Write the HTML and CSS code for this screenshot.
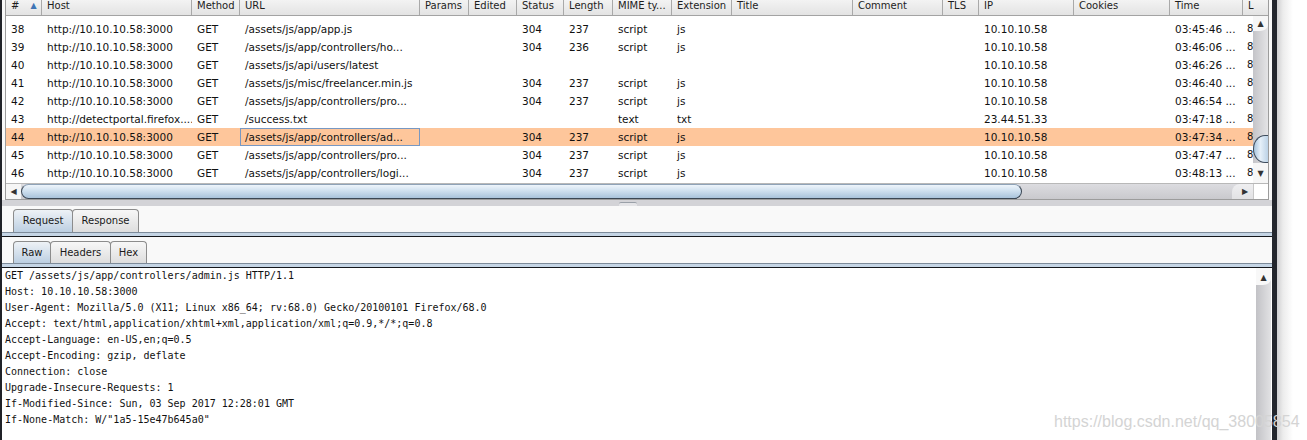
FILE: index.html
```html
<!DOCTYPE html>
<html>
<head>
<meta charset="utf-8">
<link rel="stylesheet" href="styles.css">
</head>
<body>
<div class="screen">
  <div class="edge-left"></div>
  <div class="app">
    <div class="table-panel">
      <div class="table-box">
        <div class="thead">
          <div class="th w-num">#<span class="sort">▲</span></div>
          <div class="th w-host">Host</div>
          <div class="th w-method">Method</div>
          <div class="th w-url">URL</div>
          <div class="th w-params">Params</div>
          <div class="th w-edited">Edited</div>
          <div class="th w-status">Status</div>
          <div class="th w-length">Length</div>
          <div class="th w-mime">MIME ty...</div>
          <div class="th w-ext">Extension</div>
          <div class="th w-title">Title</div>
          <div class="th w-comment">Comment</div>
          <div class="th w-tls">TLS</div>
          <div class="th w-ip">IP</div>
          <div class="th w-cookies">Cookies</div>
          <div class="th w-time">Time</div>
          <div class="th w-last">L</div>
        </div>
        <div class="tbody-wrap">
          <div class="rows">
            <div class="row">
              <div class="td w-num">38</div><div class="td w-host">http://10.10.10.58:3000</div><div class="td w-method">GET</div><div class="td w-url">/assets/js/app/app.js</div><div class="td w-params"></div><div class="td w-edited"></div><div class="td w-status">304</div><div class="td w-length">237</div><div class="td w-mime">script</div><div class="td w-ext">js</div><div class="td w-title"></div><div class="td w-comment"></div><div class="td w-tls"></div><div class="td w-ip">10.10.10.58</div><div class="td w-cookies"></div><div class="td w-time">03:45:46 ...</div><div class="td w-last">8</div>
            </div>
            <div class="row">
              <div class="td w-num">39</div><div class="td w-host">http://10.10.10.58:3000</div><div class="td w-method">GET</div><div class="td w-url">/assets/js/app/controllers/ho...</div><div class="td w-params"></div><div class="td w-edited"></div><div class="td w-status">304</div><div class="td w-length">236</div><div class="td w-mime">script</div><div class="td w-ext">js</div><div class="td w-title"></div><div class="td w-comment"></div><div class="td w-tls"></div><div class="td w-ip">10.10.10.58</div><div class="td w-cookies"></div><div class="td w-time">03:46:06 ...</div><div class="td w-last">8</div>
            </div>
            <div class="row">
              <div class="td w-num">40</div><div class="td w-host">http://10.10.10.58:3000</div><div class="td w-method">GET</div><div class="td w-url">/assets/js/api/users/latest</div><div class="td w-params"></div><div class="td w-edited"></div><div class="td w-status"></div><div class="td w-length"></div><div class="td w-mime"></div><div class="td w-ext"></div><div class="td w-title"></div><div class="td w-comment"></div><div class="td w-tls"></div><div class="td w-ip">10.10.10.58</div><div class="td w-cookies"></div><div class="td w-time">03:46:26 ...</div><div class="td w-last">8</div>
            </div>
            <div class="row">
              <div class="td w-num">41</div><div class="td w-host">http://10.10.10.58:3000</div><div class="td w-method">GET</div><div class="td w-url">/assets/js/misc/freelancer.min.js</div><div class="td w-params"></div><div class="td w-edited"></div><div class="td w-status">304</div><div class="td w-length">237</div><div class="td w-mime">script</div><div class="td w-ext">js</div><div class="td w-title"></div><div class="td w-comment"></div><div class="td w-tls"></div><div class="td w-ip">10.10.10.58</div><div class="td w-cookies"></div><div class="td w-time">03:46:40 ...</div><div class="td w-last">8</div>
            </div>
            <div class="row">
              <div class="td w-num">42</div><div class="td w-host">http://10.10.10.58:3000</div><div class="td w-method">GET</div><div class="td w-url">/assets/js/app/controllers/pro...</div><div class="td w-params"></div><div class="td w-edited"></div><div class="td w-status">304</div><div class="td w-length">237</div><div class="td w-mime">script</div><div class="td w-ext">js</div><div class="td w-title"></div><div class="td w-comment"></div><div class="td w-tls"></div><div class="td w-ip">10.10.10.58</div><div class="td w-cookies"></div><div class="td w-time">03:46:54 ...</div><div class="td w-last">8</div>
            </div>
            <div class="row">
              <div class="td w-num">43</div><div class="td w-host">http://detectportal.firefox....</div><div class="td w-method">GET</div><div class="td w-url">/success.txt</div><div class="td w-params"></div><div class="td w-edited"></div><div class="td w-status"></div><div class="td w-length"></div><div class="td w-mime">text</div><div class="td w-ext">txt</div><div class="td w-title"></div><div class="td w-comment"></div><div class="td w-tls"></div><div class="td w-ip">23.44.51.33</div><div class="td w-cookies"></div><div class="td w-time">03:47:18 ...</div><div class="td w-last">8</div>
            </div>
            <div class="row selected">
              <div class="td w-num">44</div><div class="td w-host">http://10.10.10.58:3000</div><div class="td w-method">GET</div><div class="td w-url focus">/assets/js/app/controllers/ad...</div><div class="td w-params"></div><div class="td w-edited"></div><div class="td w-status">304</div><div class="td w-length">237</div><div class="td w-mime">script</div><div class="td w-ext">js</div><div class="td w-title"></div><div class="td w-comment"></div><div class="td w-tls"></div><div class="td w-ip">10.10.10.58</div><div class="td w-cookies"></div><div class="td w-time">03:47:34 ...</div><div class="td w-last">8</div>
            </div>
            <div class="row">
              <div class="td w-num">45</div><div class="td w-host">http://10.10.10.58:3000</div><div class="td w-method">GET</div><div class="td w-url">/assets/js/app/controllers/pro...</div><div class="td w-params"></div><div class="td w-edited"></div><div class="td w-status">304</div><div class="td w-length">237</div><div class="td w-mime">script</div><div class="td w-ext">js</div><div class="td w-title"></div><div class="td w-comment"></div><div class="td w-tls"></div><div class="td w-ip">10.10.10.58</div><div class="td w-cookies"></div><div class="td w-time">03:47:47 ...</div><div class="td w-last">8</div>
            </div>
            <div class="row">
              <div class="td w-num">46</div><div class="td w-host">http://10.10.10.58:3000</div><div class="td w-method">GET</div><div class="td w-url">/assets/js/app/controllers/logi...</div><div class="td w-params"></div><div class="td w-edited"></div><div class="td w-status">304</div><div class="td w-length">237</div><div class="td w-mime">script</div><div class="td w-ext">js</div><div class="td w-title"></div><div class="td w-comment"></div><div class="td w-tls"></div><div class="td w-ip">10.10.10.58</div><div class="td w-cookies"></div><div class="td w-time">03:48:13 ...</div><div class="td w-last">8</div>
            </div>
          </div>
          <div class="vscroll">
            <div class="vbtn vbtn-up">▲</div>
            <div class="vtrack"></div>
            <div class="vthumb"></div>
            <div class="vbtn vbtn-down">▼</div>
          </div>
        </div>
        <div class="hbar">
          <div class="hbtn hbtn-left">◀</div>
          <div class="hthumb"></div>
          <div class="htrack"></div>
          <div class="hbtn hbtn-right">▶</div>
          <div class="hcorner"></div>
        </div>
      </div>
    </div>
    <div class="splitter"><div class="grip"></div></div>
    <div class="tabs-area">
      <div class="tabs tabs-main">
        <div class="tab tab-sel tab-request">Request</div>
        <div class="tab tab-response">Response</div>
      </div>
      <div class="tab-rule"></div>
      <div class="tabs tabs-sub">
        <div class="tab tab-sel tab-raw">Raw</div>
        <div class="tab tab-headers">Headers</div>
        <div class="tab tab-hex">Hex</div>
      </div>
      <div class="tab-rule"></div>
    </div>
    <div class="editor">
<pre class="raw">GET /assets/js/app/controllers/admin.js HTTP/1.1
Host: 10.10.10.58:3000
User-Agent: Mozilla/5.0 (X11; Linux x86_64; rv:68.0) Gecko/20100101 Firefox/68.0
Accept: text/html,application/xhtml+xml,application/xml;q=0.9,*/*;q=0.8
Accept-Language: en-US,en;q=0.5
Accept-Encoding: gzip, deflate
Connection: close
Upgrade-Insecure-Requests: 1
If-Modified-Since: Sun, 03 Sep 2017 12:28:01 GMT
If-None-Match: W/"1a5-15e47b645a0"</pre>
      <div class="vscroll2">
        <div class="vbtn vbtn-up2">▲</div>
        <div class="vtrack2"></div>
      </div>
    </div>
  </div>
  <div class="bar-dark"></div>
  <div class="shadow"></div>
  <div class="watermark">https://blog.csdn.net/qq_38005854</div>
</div>
</body>
</html>
```
FILE: styles.css
```css
html, body {
  margin: 0;
  padding: 0;
  background: #ffffff;
}

.screen {
  position: relative;
  width: 1307px;
  height: 440px;
  overflow: hidden;
  display: flex;
  font-family: "DejaVu Sans", Verdana, sans-serif;
  color: #111;
}

.edge-left {
  width: 2px;
  flex: none;
  background: #202228;
}

.app {
  width: 1270px;
  flex: none;
  display: flex;
  flex-direction: column;
  background: #f8f8f8;
}

.bar-dark {
  width: 5px;
  flex: none;
  background: #23262d;
}

.shadow {
  flex: 1;
  background: linear-gradient(to right, #cfcfd1 0px, #ececec 6px, #ffffff 16px);
}

/* ---------- table ---------- */
.table-panel {
  padding: 0 3px 0 3px;
  height: 200px;
  flex: none;
}

.table-box {
  width: 1264px;
  height: 200px;
  box-sizing: border-box;
  border-left: 1px solid #9c9c9c;
  border-right: 1px solid #9c9c9c;
  border-bottom: 1px solid #9c9c9c;
  display: flex;
  flex-direction: column;
  background: #fff;
}

.thead {
  display: flex;
  height: 16px;
  box-sizing: border-box;
  border-bottom: 1px solid #a3a3a3;
  background: linear-gradient(#f3f3f3, #e3e3e3);
  flex: none;
}

.th {
  box-sizing: border-box;
  border-right: 1px solid #a9a9a9;
  padding-left: 5px;
  font-size: 10px;
  line-height: 11px;
  color: #1d1d1d;
  white-space: nowrap;
  overflow: hidden;
  flex: none;
}

.th.w-last {
  flex: 1;
  border-right: none;
}

.sort {
  color: #3f74b5;
  font-size: 8px;
  margin-left: 11px;
  position: relative;
  top: -1px;
}

.w-num { width: 36px; }
.w-host { width: 150px; }
.w-method { width: 48px; }
.w-url { width: 180px; }
.w-params { width: 49px; }
.w-edited { width: 48px; }
.w-status { width: 47px; }
.w-length { width: 49px; }
.w-mime { width: 59px; }
.w-ext { width: 60px; }
.w-title { width: 121px; }
.w-comment { width: 90px; }
.w-tls { width: 36px; }
.w-ip { width: 95px; }
.w-cookies { width: 96px; }
.w-time { width: 73px; }

.tbody-wrap {
  display: flex;
  height: 167px;
  flex: none;
}

.rows {
  flex: 1;
  padding-top: 4px;
  overflow: hidden;
  background: #fff;
}

.row {
  display: flex;
  height: 18px;
}

.row.selected {
  background: #fec69b;
}

.td {
  box-sizing: border-box;
  padding-left: 5px;
  font-size: 10.5px;
  line-height: 18px;
  white-space: nowrap;
  overflow: hidden;
  flex: none;
  color: #111;
}

.td.w-last {
  flex: 1;
  padding-left: 4px;
  font-size: 10px;
}

.td.focus {
  box-shadow: inset 0 0 0 1px #7898c2;
}

/* vertical scrollbar (table) */
.vscroll {
  width: 15px;
  flex: none;
  display: flex;
  flex-direction: column;
  background: linear-gradient(to right, #c4c4c8, #e4e4e6);
}

.vbtn {
  height: 15px;
  flex: none;
  text-align: center;
  font-size: 8px;
  line-height: 15px;
  color: #333;
  background: #f6f6f6;
}

.vbtn-up {
  border-bottom-right-radius: 8px 6px;
  background: #f6f6f6;
}

.vtrack {
  flex: 1;
}

.vthumb {
  height: 28px;
  flex: none;
  box-sizing: border-box;
  border: 1px solid #3d4b5c;
  border-right: none;
  border-radius: 12px 0 0 12px / 14px 0 0 14px;
  background: linear-gradient(to right, #a8c4dd, #e6f0f9 45%, #bcd2e6);
}

.vbtn-down {
  height: 20px;
  line-height: 22px;
  background: #f6f6f6;
}

/* horizontal scrollbar */
.hbar {
  display: flex;
  height: 16px;
  flex: none;
  border-top: 1px solid #b8b8b8;
  box-sizing: border-box;
  background: linear-gradient(#dcdce0, #c9c9cd);
}

.hbtn {
  flex: none;
  font-size: 8px;
  line-height: 15px;
  color: #333;
  text-align: center;
}

.hbtn-left {
  width: 15px;
  background: #f6f6f6;
}

.hthumb {
  width: 1001px;
  flex: none;
  box-sizing: border-box;
  border: 1px solid #3b4754;
  border-top-color: #8fa3b8;
  border-radius: 8px;
  background: linear-gradient(#eef5fb, #cfe0ef 45%, #a9c3db);
}

.htrack {
  width: 210px;
  flex: none;
}

.hbtn-right {
  width: 21px;
  padding-left: 5px;
  box-sizing: border-box;
  background: linear-gradient(#efeff1, #e2e2e4);
  border-top-left-radius: 8px;
}

.hcorner {
  width: 15px;
  flex: none;
  background: #fff;
  border-left: 1px solid #c8c8c8;
  box-sizing: border-box;
}

/* ---------- splitter ---------- */
.splitter {
  height: 6px;
  flex: none;
  background: #d3d3d7;
  display: flex;
  justify-content: center;
  align-items: flex-end;
  padding-right: 18px;
  box-sizing: border-box;
}

.grip {
  width: 18px;
  height: 4px;
  box-sizing: border-box;
  border-top: 1px solid #9aa0a8;
  background: #e4e4e7;
  border-radius: 2px 2px 0 0;
}

/* ---------- tabs ---------- */
.tabs-area {
  flex: none;
  background: #f9f9f9;
}

.tabs {
  display: flex;
  padding-left: 11px;
}

.tabs-main {
  padding-top: 3px;
  height: 26px;
  box-sizing: border-box;
}

.tabs-sub {
  padding-top: 4px;
  height: 26px;
  box-sizing: border-box;
}

.tab {
  box-sizing: border-box;
  border: 1px solid #8c8c8c;
  border-bottom: none;
  border-radius: 4px 4px 0 0;
  background: linear-gradient(#f7f7f7, #dedede);
  font-size: 10px;
  color: #1a1a1a;
  text-align: center;
  line-height: 21px;
  margin-right: -1px;
}

.tab-sel {
  background: linear-gradient(#eef2f6, #bccfe2);
}

.tab-request { width: 60px; }
.tab-response { width: 67px; }
.tab-raw { width: 38px; }
.tab-headers { width: 61px; }
.tab-hex { width: 37px; }

.tab-rule {
  height: 5px;
  box-sizing: border-box;
  border-top: 1px solid #7d8b9a;
  border-bottom: 1px solid #15171b;
  background: #c5d5e5;
}

/* ---------- editor ---------- */
.editor {
  flex: 1;
  display: flex;
  min-height: 0;
  background: #fff;
}

.raw {
  flex: 1;
  margin: 0;
  padding: 0 3px;
  font-family: "DejaVu Sans Mono", monospace;
  font-size: 10px;
  line-height: 16px;
  color: #111;
  background: #fff;
  overflow: hidden;
}

.vscroll2 {
  width: 15px;
  flex: none;
  display: flex;
  flex-direction: column;
  margin-right: 1px;
  background: linear-gradient(to right, #c2c2c6, #e2e2e4);
}

.vbtn-up2 {
  height: 17px;
  line-height: 19px;
  border-bottom-right-radius: 8px 6px;
  background: #f8f8f8;
}

.vtrack2 {
  flex: 1;
}

/* ---------- watermark overlay ---------- */
.watermark {
  position: absolute;
  z-index: 2;
  left: 1054px;
  top: 412px;
  font-family: "Liberation Sans", Arial, sans-serif;
  font-size: 16px;
  line-height: 20px;
  color: #d4d4d4;
  white-space: nowrap;
}
```
